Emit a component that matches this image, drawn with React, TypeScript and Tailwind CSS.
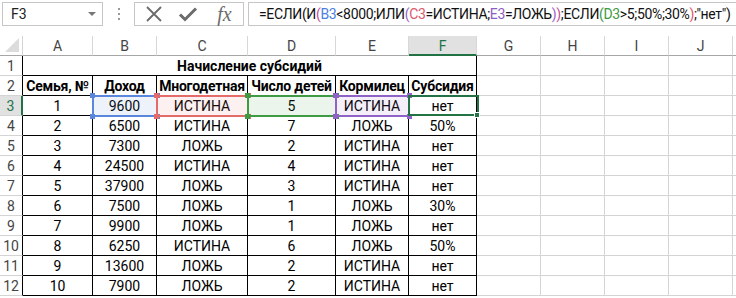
import React from "react";

const cols = ["A", "B", "C", "D", "E", "F", "G", "H", "I", "J"];
const widths = [70, 64, 91, 88, 73, 68, 64, 64, 64, 64];

const header = ["Семья, №", "Доход", "Многодетная", "Число детей", "Кормилец", "Субсидия"];
const rows: string[][] = [
  ["1", "9600", "ИСТИНА", "5", "ИСТИНА", "нет"],
  ["2", "6500", "ИСТИНА", "7", "ЛОЖЬ", "50%"],
  ["3", "7300", "ЛОЖЬ", "2", "ИСТИНА", "нет"],
  ["4", "24500", "ИСТИНА", "4", "ИСТИНА", "нет"],
  ["5", "37900", "ЛОЖЬ", "3", "ИСТИНА", "нет"],
  ["6", "7500", "ЛОЖЬ", "1", "ЛОЖЬ", "30%"],
  ["7", "9900", "ЛОЖЬ", "1", "ЛОЖЬ", "нет"],
  ["8", "6250", "ИСТИНА", "6", "ЛОЖЬ", "50%"],
  ["9", "13600", "ЛОЖЬ", "2", "ИСТИНА", "нет"],
  ["10", "7900", "ЛОЖЬ", "2", "ИСТИНА", "нет"],
];

function RangeBox({ left, top, w, h, color, fill }: { left: number; top: number; w: number; h: number; color: string; fill: string }) {
  return (
    <div className="absolute pointer-events-none" style={{ left, top, width: w, height: h }}>
      <div className="absolute inset-0" style={{ border: `2px solid ${color}`, background: fill }} />
      {[
        [-2, -2],
        [w - 3, -2],
        [-2, h - 3],
        [w - 3, h - 3],
      ].map(([x, y], i) => (
        <div key={i} className="absolute w-[5px] h-[5px]" style={{ left: x, top: y, background: color }} />
      ))}
    </div>
  );
}

export default function App() {
  return (
    <div className="w-[736px] h-[298px] bg-white overflow-hidden relative [font-family:Roboto,'Noto_Sans',sans-serif]">
      {/* Toolbar */}
      <div className="flex h-[36px] items-start pt-[2px] pl-[2px]">
        <div className="w-[101px] h-[24px] border border-[#c6c6c6] flex items-center justify-between pl-[8px] pr-[6px]">
          <span className="text-[14px] text-[#222] leading-none">F3</span>
          <span className="w-0 h-0 border-l-[4px] border-r-[4px] border-t-[4px] border-l-transparent border-r-transparent border-t-[#777]" />
        </div>
        <div className="w-[31px] h-[24px] flex flex-col items-center justify-center gap-[3px]">
          <span className="w-[2px] h-[2px] bg-[#999]" />
          <span className="w-[2px] h-[2px] bg-[#999]" />
          <span className="w-[2px] h-[2px] bg-[#999]" />
        </div>
        <div className="w-[110px] h-[24px] border border-[#c6c6c6] flex items-center">
          <div className="w-[38px] flex justify-center">
            <svg width="18" height="18" viewBox="0 0 18 18">
              <path d="M2 2 L16 16 M16 2 L2 16" stroke="#6b6b6b" strokeWidth="1.8" fill="none" />
            </svg>
          </div>
          <div className="w-[30px] flex justify-center">
            <svg width="20" height="16" viewBox="0 0 20 16">
              <path d="M2 8.5 L7 13.5 L18 2.5" stroke="#6b6b6b" strokeWidth="3" fill="none" />
            </svg>
          </div>
          <div className="flex-1 flex justify-center pl-[3px]">
            <span className="[font-family:'Liberation_Serif',serif] italic text-[20px] text-[#6b6b6b] leading-none">fx</span>
          </div>
        </div>
        <div className="ml-[4px] flex-1 h-[24px] border border-[#c6c6c6] border-r-0 flex items-center pl-[10px] whitespace-nowrap overflow-hidden">
          <span className="text-[14px] text-[#111] tracking-[-0.35px]">
            =ЕСЛИ(И<span className="text-[#c0509a]">(</span>
            <span className="text-[#4a7fe0]">B3</span>&lt;8000;ИЛИ<span className="text-[#9a5fc8]">(</span>
            <span className="text-[#e0566a]">C3</span>=ИСТИНА;<span className="text-[#8e5cc8]">E3</span>=ЛОЖЬ
            <span className="text-[#9a5fc8]">)</span>
            <span className="text-[#c0509a]">)</span>;ЕСЛИ<span className="text-[#3e9a3e]">(</span>
            <span className="text-[#3e9a3e]">D3</span>&gt;5;50%;30%<span className="text-[#e0566a]">)</span>;"нет")
          </span>
        </div>
      </div>

      {/* Grid */}
      <div className="relative">
        {/* column header row */}
        <div className="flex h-[20px]">
          <div className="w-[23px] h-[20px] border-r border-[#d4d4d4] border-b border-b-[#a6a6a6] relative">
            <span className="absolute right-[3px] bottom-[3px] w-0 h-0 border-b-[14px] border-b-[#dcdcdc] border-l-[14px] border-l-transparent" />
          </div>
          {cols.map((c, i) => (
            <div
              key={c}
              className={`h-[20px] flex items-center justify-center pt-[2px] text-[14px] border-r border-[#d8d8d8] ${
                c === "F" ? "bg-[#e1e1e1] text-[#217346] border-b-2 border-b-[#217346]" : "text-[#444] border-b border-b-[#a6a6a6]"
              }`}
              style={{ width: widths[i] }}
            >
              {c}
            </div>
          ))}
          <div className="flex-1 border-b border-b-[#a6a6a6]" />
        </div>

        {/* Row 1 */}
        <div className="flex h-[20px]">
          <div className="w-[23px] h-[20px] border-r border-r-[#000] border-b border-b-[#d4d4d4] flex items-center justify-center pt-[2px] text-[14px] text-[#444]">1</div>
          <div className="h-[20px] border-r border-black border-b flex items-center justify-center pt-[2px] font-bold text-[14px] text-black whitespace-nowrap" style={{ width: 70 + 64 + 91 + 88 + 73 + 68 }}>
            Начисление субсидий
          </div>
          {[6, 7, 8, 9].map((i) => (
            <div key={i} className="h-[20px] border-r border-b border-[#d4d4d4]" style={{ width: widths[i] }} />
          ))}
          <div className="flex-1 border-b border-[#d4d4d4]" />
        </div>

        {/* Row 2 and data */}
        {[header, ...rows].map((r, ri) => {
          const rowNum = ri + 2;
          const sel = rowNum === 3;
          return (
            <div key={ri} className="flex h-[20px]">
              <div
                className={`w-[23px] h-[20px] border-b border-b-[#d4d4d4] flex items-center justify-center pt-[2px] text-[14px] ${
                  sel ? "bg-[#e1e1e1] text-[#217346] border-r-2 border-r-[#217346]" : "text-[#444] border-r border-r-[#000]"
                }`}
              >
                {rowNum}
              </div>
              {r.map((v, ci) => (
                <div
                  key={ci}
                  className={`h-[20px] border-r border-b border-black flex items-center justify-center pt-[2px] text-[14px] text-black whitespace-nowrap ${
                    ri === 0 ? "font-bold tracking-[-0.2px]" : ""
                  }`}
                  style={{ width: widths[ci] }}
                >
                  {v}
                </div>
              ))}
              {[6, 7, 8, 9].map((i) => (
                <div key={i} className="h-[20px] border-r border-b border-[#d4d4d4]" style={{ width: widths[i] }} />
              ))}
              <div className="flex-1 border-b border-[#d4d4d4]" />
            </div>
          );
        })}

        {/* selection overlays */}
        <RangeBox left={92} top={59} w={66} h={22} color="#5a86dc" fill="rgba(90,134,220,0.1)" />
        <RangeBox left={156} top={59} w={93} h={22} color="#e56a6a" fill="rgba(229,106,106,0.1)" />
        <RangeBox left={247} top={59} w={90} h={22} color="#3f9a44" fill="rgba(63,154,68,0.1)" />
        <RangeBox left={335} top={59} w={75} h={22} color="#8f62c8" fill="rgba(143,98,200,0.1)" />
        <div className="absolute border-2 border-[#217346]" style={{ left: 408, top: 59, width: 71, height: 21 }} />
        <div className="absolute w-[6px] h-[6px] bg-[#217346] border border-white" style={{ left: 474, top: 76 }} />
      </div>
    </div>
  );
}
